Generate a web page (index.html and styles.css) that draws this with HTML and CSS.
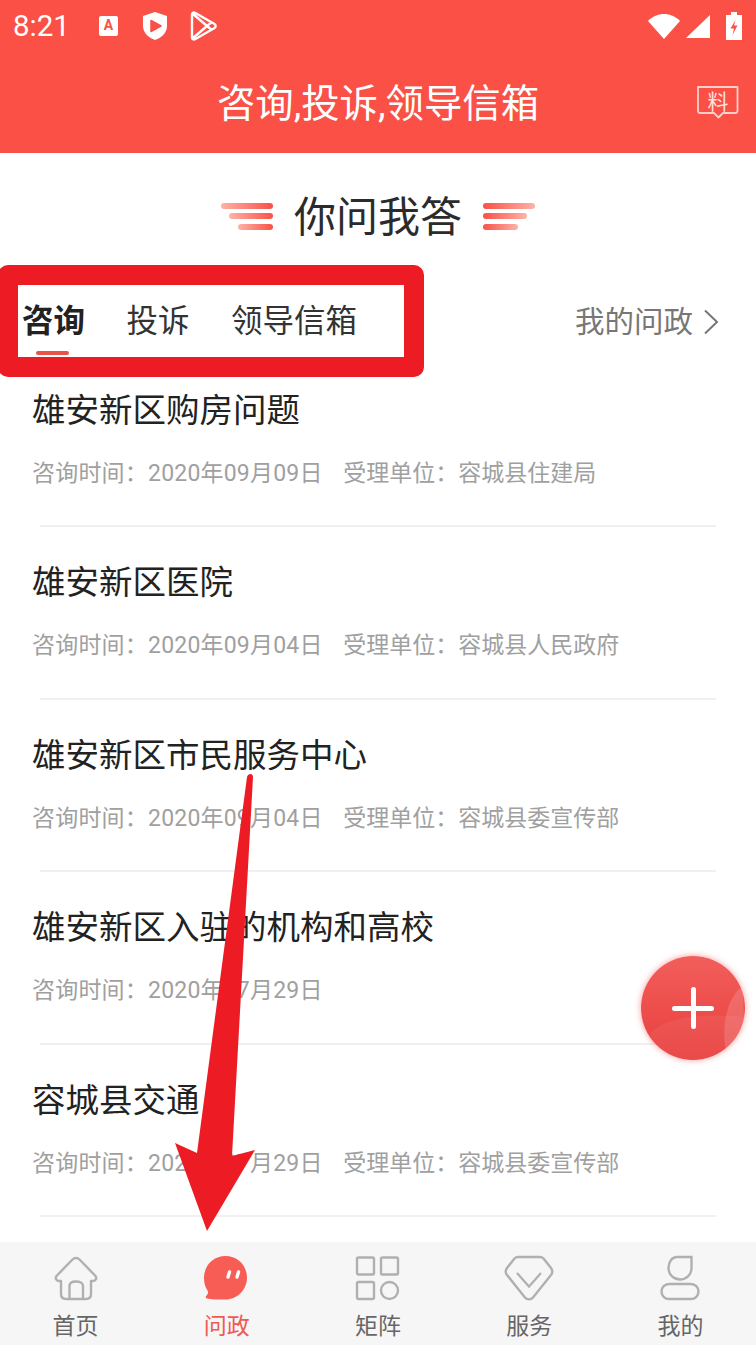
FILE: index.html
```html
<!DOCTYPE html>
<html lang="zh-CN">
<head>
<meta charset="utf-8">
<title>你问我答</title>
<link rel="stylesheet" href="styles.css">
</head>
<body>
<div class="page">
  <div class="top">
    <div class="status">
      <span class="time">8:21</span>
      <span class="app-a">A</span>
      <svg class="ic-shield" width="24" height="28" viewBox="0 0 24 28"><path d="M12 0 L24 4 V14 C24 21 18 26 12 28 C6 26 0 21 0 14 V4 Z" fill="#fff"/><path d="M8 8.5 L18 14 L8 19.5 Z" fill="#fa5046" stroke="#fa5046" stroke-width="1.5" stroke-linejoin="round"/></svg>
      <svg class="ic-play" width="27" height="30" viewBox="0 0 27 30"><path d="M2 3.5 C2 1.8 3.5 1 5 1.8 L24.5 13 C26 14 26 16 24.5 17 L5 28.2 C3.5 29 2 28.2 2 26.5 Z M2.5 2.5 L17 15 L2.5 27.5 M17 15 L22 10.8 M17 15 L22 19.2" fill="none" stroke="#fff" stroke-width="2.4" stroke-linejoin="round"/></svg>
      <span class="status-right">
        <svg width="32" height="25" viewBox="0 0 32 25"><path d="M0 7 C9 -2.3 23 -2.3 32 7 L16 25 Z" fill="#fff"/></svg>
        <svg width="24" height="23" viewBox="0 0 24 23"><path d="M24 0 V23 H0 Z" fill="#fff"/></svg>
        <svg class="ic-batt" width="16" height="28" viewBox="0 0 16 28"><path d="M5 0 H11 V3 H16 V28 H0 V3 H5 Z" fill="#fff"/><path d="M9.5 8 L4.5 16.5 H8 L6.5 23 L11.5 13.5 H8 Z" fill="#fa5046"/></svg>
      </span>
    </div>
    <div class="bar">
      <span></span>
      <h1 class="bar-title">咨询,投诉,领导信箱</h1>
      <svg class="bar-icon" width="42" height="33" viewBox="0 0 42 33">
        <path d="M7 1 H40.500 V25 C40.500 26.500 39.500 27 38 27 H26 L21.500 31.500 L17 27 H3 C1.800 27 1 26 1 25 V1 Z" fill="none" stroke="#fff" stroke-opacity=".72" stroke-width="1.800" stroke-linejoin="round"/>
        <text x="21" y="22.500" text-anchor="middle" class="bar-icon-text">料</text>
      </svg>
    </div>
  </div>

  <div class="section-head">
    <div class="bars bars-left"><i></i><i></i><i></i></div>
    <h2 class="section-title">你问我答</h2>
    <div class="bars bars-right"><i></i><i></i><i></i></div>
  </div>

  <div class="tabs">
    <div class="tab-list">
      <a class="tab tab-on">咨询</a>
      <a class="tab">投诉</a>
      <a class="tab">领导信箱</a>
    </div>
    <a class="my-link">我的问政
      <svg width="16" height="26" viewBox="0 0 16 26"><path d="M2 1.500 L14 13 L2 24.500" fill="none" stroke="#777" stroke-width="2"/></svg>
    </a>
  </div>

  <div class="list">
    <div class="item">
      <div class="item-title">雄安新区购房问题</div>
      <div class="item-meta"><span>咨询时间&#xFF1A;2020年09月09日</span><span>受理单位&#xFF1A;容城县住建局</span></div>
    </div>
    <div class="item">
      <div class="item-title">雄安新区医院</div>
      <div class="item-meta"><span>咨询时间&#xFF1A;2020年09月04日</span><span>受理单位&#xFF1A;容城县人民政府</span></div>
    </div>
    <div class="item">
      <div class="item-title">雄安新区市民服务中心</div>
      <div class="item-meta"><span>咨询时间&#xFF1A;2020年09月04日</span><span>受理单位&#xFF1A;容城县委宣传部</span></div>
    </div>
    <div class="item">
      <div class="item-title">雄安新区入驻的机构和高校</div>
      <div class="item-meta"><span>咨询时间&#xFF1A;2020年07月29日</span></div>
    </div>
    <div class="item">
      <div class="item-title">容城县交通</div>
      <div class="item-meta"><span>咨询时间&#xFF1A;2020年07月29日</span><span>受理单位&#xFF1A;容城县委宣传部</span></div>
    </div>
  </div>

  <div class="nav">
    <a class="nav-item">
      <svg width="46" height="46" viewBox="0 0 46 46"><path d="M23 3 C21.500 3 20.500 3.500 19.500 4.500 L3.500 21 C2 23 3 26 6 26 H8 V39 C8 42 10 44 13 44 H33 C36 44 38 42 38 39 V26 H40 C43 26 44 23 42.500 21 L26.500 4.500 C25.500 3.500 24.500 3 23 3 Z M16.500 44 V31 C16.500 28 19.500 26.500 23 26.500 C26.500 26.500 30 28 30 31 V44" fill="none" stroke="#b0b0b0" stroke-width="2.400" stroke-linejoin="round"/></svg>
      <span>首页</span>
    </a>
    <a class="nav-item nav-on">
      <svg class="ic-chat" width="46" height="46" viewBox="0 0 46 46"><path d="M23.500 1 C35.500 1 45 10.500 45 22.500 C45 34.500 35.500 44.500 23.500 44.500 C16.500 44.500 8 44.500 5 43.500 C3.500 43 3.500 41.500 4.500 40.500 C6 39 6.500 37.500 5.500 35.500 C3 32 2 27.500 2 22.500 C2 10.500 11.500 1 23.500 1 Z" fill="#f75d55"/><path d="M27.500 17 L26 22 M36.500 17 L35 22" fill="none" stroke="#fff" stroke-width="3.400" stroke-linecap="round"/></svg>
      <span>问政</span>
    </a>
    <a class="nav-item">
      <svg width="46" height="46" viewBox="0 0 46 46"><g fill="none" stroke="#b0b0b0" stroke-width="2.400"><rect x="2" y="2.500" width="17" height="17" rx="1.500"/><rect x="26" y="2.500" width="17" height="17" rx="1.500"/><rect x="2" y="27" width="17" height="17" rx="1.500"/><circle cx="34.500" cy="35.500" r="8.500"/></g></svg>
      <span>矩阵</span>
    </a>
    <a class="nav-item">
      <svg width="50" height="46" viewBox="0 0 50 46"><path d="M14 2 H36 C37.500 2 38.500 2.500 39.500 3.500 L47 13 C48.500 15 48.500 18 47 20 L29 42.500 C27 45 23 45 21 42.500 L3 20 C1.500 18 1.500 15 3 13 L10.500 3.500 C11.500 2.500 12.500 2 14 2 Z" fill="none" stroke="#b0b0b0" stroke-width="2.400" stroke-linejoin="round"/><path d="M13 18 L25 31.500 L37 18" fill="none" stroke="#b0b0b0" stroke-width="2.200"/></svg>
      <span>服务</span>
    </a>
    <a class="nav-item">
      <svg width="46" height="46" viewBox="0 0 46 46"><path d="M20 2 H34.500 V13 C34.500 20 29 24.500 23 24.500 C16.500 24.500 11.500 19.500 11.500 13 C11.500 7 15 2 20 2 Z" fill="none" stroke="#b0b0b0" stroke-width="2.400"/><rect x="4.500" y="29" width="37" height="15" rx="7.500" fill="none" stroke="#b0b0b0" stroke-width="2.400"/></svg>
      <span>我的</span>
    </a>
  </div>

  <div class="fab">
    <svg class="fab-shine" width="104" height="104" viewBox="0 0 106 106"><path d="M10 78 C28 62 60 58 106 62 V106 H0 Z" fill="#fff" fill-opacity=".06"/><path d="M104 30 C88 42 80 70 88 106 H106 Z" fill="#fff" fill-opacity=".15"/></svg>
    <span class="fab-h"></span>
    <span class="fab-v"></span>
  </div>

  <div class="mark-box"></div>
  <svg class="mark-arrow" width="756" height="1345" viewBox="0 0 756 1345"><path d="M247 777 C248 773 253 773 253 777 L232 1156 L255 1150 L207 1231 L175 1143 L197 1153 Z" fill="#ed1c24"/></svg>
</div>
</body>
</html>
```

FILE: styles.css
```css
* { box-sizing: border-box; }
html, body { margin: 0; padding: 0; }
body {
  font-family: Roboto, "Noto Sans CJK SC", sans-serif;
  background: #fff;
  color: #222;
}
h1, h2 { margin: 0; font-weight: normal; }

.page {
  position: relative;
  width: 756px;
  height: 1345px;
  overflow: hidden;
  display: flex;
  flex-direction: column;
}

/* red header */
.top { background: #fa5046; height: 153px; color: #fff; flex: none; }
.status { height: 52px; display: flex; align-items: center; padding: 0 14px 0 13px; }
.time { font-size: 29.500px; width: 86px; }
.app-a {
  width: 19px;
  height: 20px;
  background: #fff;
  color: #fa5046;
  border-radius: 2px;
  font-size: 14px;
  font-weight: bold;
  line-height: 18px;
  text-align: center;
  margin-right: 25px;
}
.ic-shield { margin-right: 23px; }
.status-right { margin-left: auto; display: flex; align-items: center; gap: 6px; }
.ic-batt { margin-left: 10px; }

.bar { height: 101px; display: grid; grid-template-columns: 1fr auto 1fr; align-items: center; }
.bar-title { font-size: 38.400px; line-height: 50px; padding-top: 3px; }
.bar-icon { justify-self: end; margin-right: 17px; }
.bar-icon-text { font-size: 21px; fill: #fff; fill-opacity: .85; }

/* section heading */
.section-head { height: 126px; flex: none; display: flex; align-items: center; justify-content: center; gap: 21px; }
.section-title { font-size: 42px; line-height: 60px; color: #2b2b2b; margin-top: 3px; }
.bars { width: 52px; display: flex; flex-direction: column; gap: 4.500px; }
.bars i { display: block; height: 6px; border-radius: 3px; }
.bars-left { align-items: flex-end; }
.bars-left i { background: linear-gradient(90deg, #fdb3a8, #fa5046); }
.bars-right i { background: linear-gradient(90deg, #fa5046, #fdb3a8); }
.bars i:nth-child(1) { width: 52px; }
.bars i:nth-child(2) { width: 44px; }
.bars i:nth-child(3) { width: 35px; }

/* tabs */
.tabs { height: 76px; flex: none; display: flex; align-items: flex-start; justify-content: space-between; padding: 21px 37px 0 22px; }
.tab-list { display: flex; gap: 41.500px; }
.tab { position: relative; font-size: 31.500px; line-height: 44px; color: #333; }
.tab-on { font-weight: bold; color: #222; }
.tab-on::after {
  content: "";
  position: absolute;
  left: 14px;
  top: 51px;
  width: 33px;
  height: 4px;
  border-radius: 2px;
  background: #e8534a;
}
.my-link { display: flex; align-items: center; gap: 10px; font-size: 29.500px; line-height: 44px; color: #777; }

/* list */
.list { flex: 1; overflow: hidden; }
.item { margin: 0 40px; height: 172.400px; border-bottom: 2px solid #f0f0f0; padding-top: 36px; }
.item-title { margin-left: -8px; font-size: 33.500px; line-height: 40px; color: #222; white-space: nowrap; }
.item-meta { margin: 28px 0 0 -8px; display: flex; gap: 20.500px; font-size: 23px; line-height: 30px; color: #a0a0a0; white-space: nowrap; }
.item-meta span:first-child { letter-spacing: .2px; }

/* bottom nav */
.nav { height: 103px; flex: none; background: #f6f6f6; display: grid; grid-template-columns: repeat(5, 1fr); }
.nav-item { display: flex; flex-direction: column; align-items: center; padding-top: 13px; font-size: 23px; color: #666; }
.nav-item svg { display: block; height: 46px; }
.nav-item span { line-height: 32px; margin-top: 10px; }
.nav-item .ic-chat { margin-left: -3px; }
.nav-on { color: #ee5a52; }

/* floating add button */
.fab {
  position: absolute;
  left: 641px;
  top: 956px;
  width: 104px;
  height: 104px;
  border-radius: 50%;
  overflow: hidden;
  background: linear-gradient(180deg, #f25e5b, #e83f3d);
  box-shadow: 0 0 6px rgba(240, 70, 70, .55);
}
.fab-shine { position: absolute; left: 0; top: 0; }
.fab-h, .fab-v { position: absolute; background: #fff; border-radius: 3px; }
.fab-h { left: 31px; top: 49.500px; width: 42px; height: 5px; }
.fab-v { left: 49.500px; top: 31px; width: 5px; height: 42px; }

/* annotation drawn over the screenshot */
.mark-box {
  position: absolute;
  left: -2px;
  top: 265px;
  width: 426px;
  height: 112px;
  border: 20px solid #ed1c24;
  border-radius: 10px;
}
.mark-arrow { position: absolute; left: 0; top: 0; pointer-events: none; }
```
